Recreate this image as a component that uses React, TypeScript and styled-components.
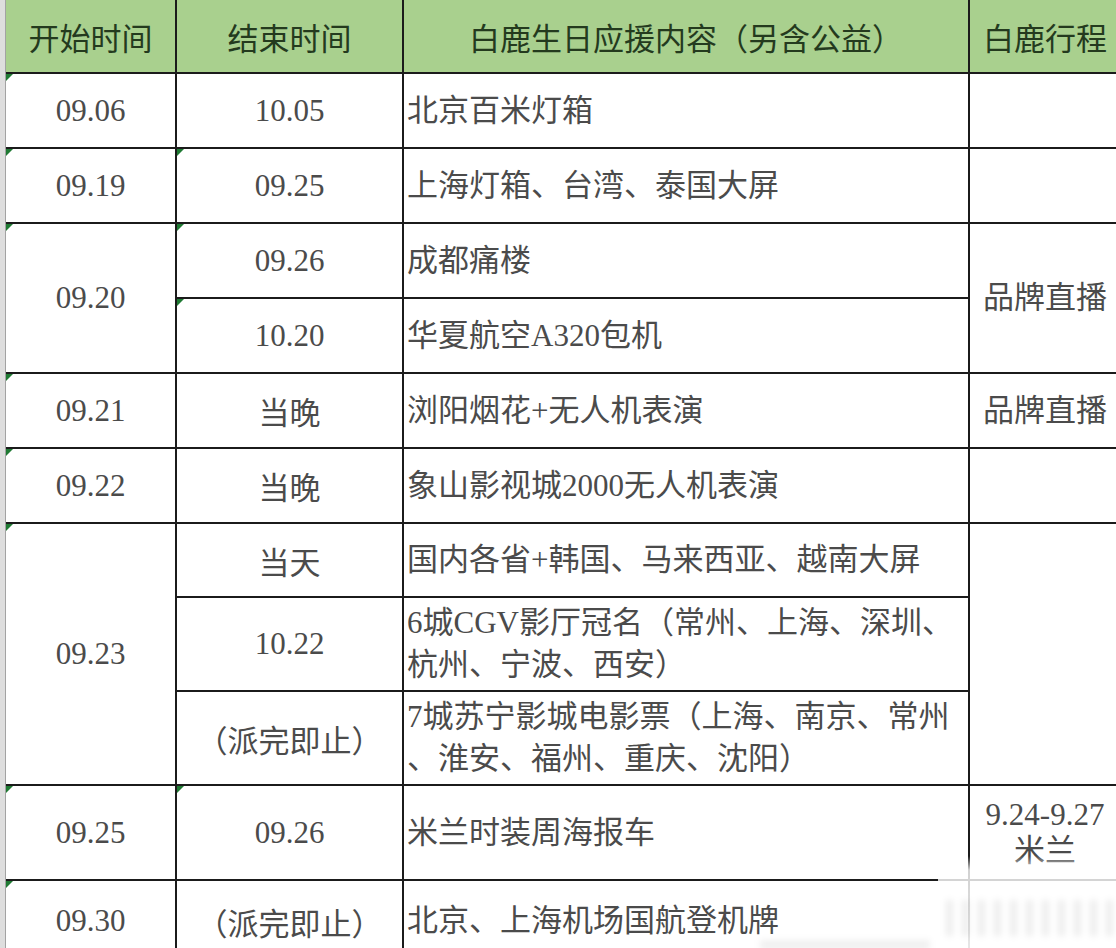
import React from "react";
import styled, { createGlobalStyle } from "styled-components";

// // // //

const GlobalStyle = createGlobalStyle`
    html, body {
        margin: 0;
        padding: 0;
        background: #ffffff;
        overflow: hidden;
    }
    #root {
        width: 1116px;
        height: 948px;
        overflow: hidden;
    }
`;

const Sheet = styled.div`
    position: relative;
    display: flex;
    width: 1116px;
    height: 948px;
    overflow: hidden;
    font-family: "Liberation Serif", "Noto Sans CJK SC", serif;
    font-size: 31px;
    color: #4b4b4b;
    text-spacing-trim: space-all;
`;

const RowGutter = styled.div`
    flex: 0 0 5px;
    background: #dedede;
    border-right: 1px solid #a3a3a3;
`;

const Grid = styled.div`
    flex: none;
    display: grid;
    grid-template-columns: 169px 225px 564px 150px;
    grid-template-rows: 72px 73px 73px 73px 73px 73px 73px 72px 92px 92px 93px 80px;
    gap: 2px;
    align-content: start;
    background: #1b1b1b;
`;

const Cell = styled.div<{
    $col: number;
    $row: number;
    $span?: number;
    $left?: boolean;
    $flag?: boolean;
}>`
    position: relative;
    grid-column: ${p => p.$col};
    grid-row: ${p => p.$row} / span ${p => p.$span || 1};
    display: flex;
    align-items: center;
    justify-content: ${p => (p.$left ? "flex-start" : "center")};
    padding: 0 ${p => (p.$left ? "3px" : "0")};
    background: #ffffff;
    white-space: nowrap;
    overflow: hidden;

    &::before {
        content: "";
        display: ${p => (p.$flag ? "block" : "none")};
        position: absolute;
        top: 0;
        left: 0;
        border-top: 7px solid #1f7a33;
        border-right: 7px solid transparent;
    }
`;

const HeadCell = styled(Cell)`
    background: #a9d08e;
    color: #243a1e;
`;

const Lines = styled.div<{ $lh: number; $center?: boolean }>`
    line-height: ${p => p.$lh}px;
    text-align: ${p => (p.$center ? "center" : "left")};
`;

// covers the bottom right corner like the blurred watermark of the photo
const Watermark = styled.div`
    position: absolute;
    left: 938px;
    top: 856px;
    width: 190px;
    height: 100px;
    background: linear-gradient(
        to bottom,
        rgba(255, 255, 255, 0) 0px,
        rgba(255, 255, 255, 0.8) 14px,
        rgba(255, 255, 255, 0.9) 100%
    );
`;

const WatermarkInk = styled.div`
    position: absolute;
    left: 8px;
    right: 8px;
    top: 44px;
    height: 36px;
    background: repeating-linear-gradient(
        90deg,
        rgba(0, 0, 0, 0.07) 0px,
        rgba(0, 0, 0, 0.07) 7px,
        transparent 7px,
        transparent 16px
    );
    filter: blur(3px);
`;

const FootMark = styled.div`
    position: absolute;
    left: 760px;
    top: 940px;
    width: 170px;
    height: 10px;
    background: rgba(0, 0, 0, 0.06);
    filter: blur(3px);
`;

type Row = {
    start?: { text: string; span: number; flag: boolean };
    end: { text: string; flag: boolean };
    content: string[];
    trip?: { text: string[]; span: number };
};

const rows: Row[] = [
    {
        start: { text: "09.06", span: 1, flag: true },
        end: { text: "10.05", flag: false },
        content: ["北京百米灯箱"],
        trip: { text: [], span: 1 },
    },
    {
        start: { text: "09.19", span: 1, flag: true },
        end: { text: "09.25", flag: true },
        content: ["上海灯箱、台湾、泰国大屏"],
        trip: { text: [], span: 1 },
    },
    {
        start: { text: "09.20", span: 2, flag: true },
        end: { text: "09.26", flag: true },
        content: ["成都痛楼"],
        trip: { text: ["品牌直播"], span: 2 },
    },
    {
        end: { text: "10.20", flag: true },
        content: ["华夏航空A320包机"],
    },
    {
        start: { text: "09.21", span: 1, flag: true },
        end: { text: "当晚", flag: false },
        content: ["浏阳烟花+无人机表演"],
        trip: { text: ["品牌直播"], span: 1 },
    },
    {
        start: { text: "09.22", span: 1, flag: true },
        end: { text: "当晚", flag: false },
        content: ["象山影视城2000无人机表演"],
        trip: { text: [], span: 1 },
    },
    {
        start: { text: "09.23", span: 3, flag: true },
        end: { text: "当天", flag: false },
        content: ["国内各省+韩国、马来西亚、越南大屏"],
        trip: { text: [], span: 3 },
    },
    {
        end: { text: "10.22", flag: false },
        content: ["6城CGV影厅冠名（常州、上海、深圳、", "杭州、宁波、西安）"],
    },
    {
        end: { text: "（派完即止）", flag: false },
        content: ["7城苏宁影城电影票（上海、南京、常州", "、淮安、福州、重庆、沈阳）"],
    },
    {
        start: { text: "09.25", span: 1, flag: true },
        end: { text: "09.26", flag: true },
        content: ["米兰时装周海报车"],
        trip: { text: ["9.24-9.27", "米兰"], span: 1 },
    },
    {
        start: { text: "09.30", span: 1, flag: true },
        end: { text: "（派完即止）", flag: false },
        content: ["北京、上海机场国航登机牌"],
        trip: { text: [], span: 1 },
    },
];

const headers = ["开始时间", "结束时间", "白鹿生日应援内容（另含公益）", "白鹿行程"];

export default function App() {
    return (
        <Sheet>
            <GlobalStyle />
            <RowGutter />
            <Grid>
                {headers.map((h, i) => (
                    <HeadCell key={h} $col={i + 1} $row={1}>
                        {h}
                    </HeadCell>
                ))}

                {rows.map((r, i) => {
                    const row = i + 2;
                    return (
                        <React.Fragment key={row}>
                            {r.start && (
                                <Cell
                                    $col={1}
                                    $row={row}
                                    $span={r.start.span}
                                    $flag={r.start.flag}
                                >
                                    {r.start.text}
                                </Cell>
                            )}
                            <Cell $col={2} $row={row} $flag={r.end.flag}>
                                {r.end.text}
                            </Cell>
                            <Cell $col={3} $row={row} $left>
                                <Lines $lh={42}>
                                    {r.content.map(line => (
                                        <div key={line}>{line}</div>
                                    ))}
                                </Lines>
                            </Cell>
                            {r.trip && (
                                <Cell $col={4} $row={row} $span={r.trip.span}>
                                    <Lines $lh={36} $center>
                                        {r.trip.text.map(line => (
                                            <div key={line}>{line}</div>
                                        ))}
                                    </Lines>
                                </Cell>
                            )}
                        </React.Fragment>
                    );
                })}
            </Grid>

            <Watermark>
                <WatermarkInk />
            </Watermark>
            <FootMark />
        </Sheet>
    );
}
